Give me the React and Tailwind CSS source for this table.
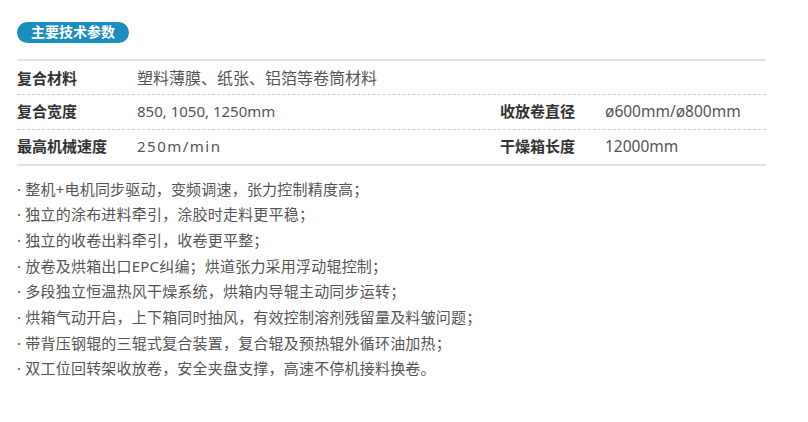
import React from "react";

const font = { fontFamily: '"Noto Sans", "Noto Sans CJK SC", sans-serif' };

const features = [
    "整机+电机同步驱动，变频调速，张力控制精度高；",
    "独立的涂布进料牵引，涂胶时走料更平稳；",
    "独立的收卷出料牵引，收卷更平整；",
    "放卷及烘箱出口EPC纠编；烘道张力采用浮动辊控制；",
    "多段独立恒温热风干燥系统，烘箱内导辊主动同步运转；",
    "烘箱气动开启，上下箱同时抽风，有效控制溶剂残留量及料皱问题；",
    "带背压钢辊的三辊式复合装置，复合辊及预热辊外循环油加热；",
    "双工位回转架收放卷，安全夹盘支撑，高速不停机接料换卷。",
];

function Label({ children }) {
    return <span className="w-[120px] shrink-0 text-[15px] font-bold text-[#333]">{children}</span>;
}

export default function App() {
    return (
        <div className="w-[808px] h-[422px] bg-white pl-[17px] pt-[21px] text-[14px]" style={font}>
            <div className="inline-flex h-[21px] items-center rounded-full bg-[#1b8dbf] px-[14px] text-[14px] font-bold leading-none text-white">
                主要技术参数
            </div>

            <div className="mt-[16px] w-[749px] border-t-2 border-[#e2e2e2]">
                <div className="flex h-[34px] items-center border-b border-dashed border-[#cfcfcf] pt-[2px]">
                    <Label>复合材料</Label>
                    <span className="text-[16px] text-[#555]">塑料薄膜、纸张、铝箔等卷筒材料</span>
                </div>
                <div className="flex h-[35px] items-center border-b border-dashed border-[#cfcfcf]">
                    <Label>复合宽度</Label>
                    <span className="w-[363px] text-[15px] text-[#555]">850, 1050, 1250mm</span>
                    <span className="w-[105px] text-[15px] font-bold text-[#333]">收放卷直径</span>
                    <span className="text-[15.5px] text-[#555]">ø600mm/ø800mm</span>
                </div>
                <div className="flex h-[36px] items-center border-b-2 border-[#e2e2e2]">
                    <Label>最高机械速度</Label>
                    <span className="w-[363px] text-[15px] tracking-[1.5px] text-[#555]">250m/min</span>
                    <span className="w-[105px] text-[15px] font-bold text-[#333]">干燥箱长度</span>
                    <span className="text-[15.5px] text-[#555]">12000mm</span>
                </div>
            </div>

            <ul className="mt-[11px] text-[15px] leading-[25.7px] tracking-[0.2px] text-[#555]">
                {features.map((f) => (
                    <li key={f}>· {f}</li>
                ))}
            </ul>
        </div>
    );
}
